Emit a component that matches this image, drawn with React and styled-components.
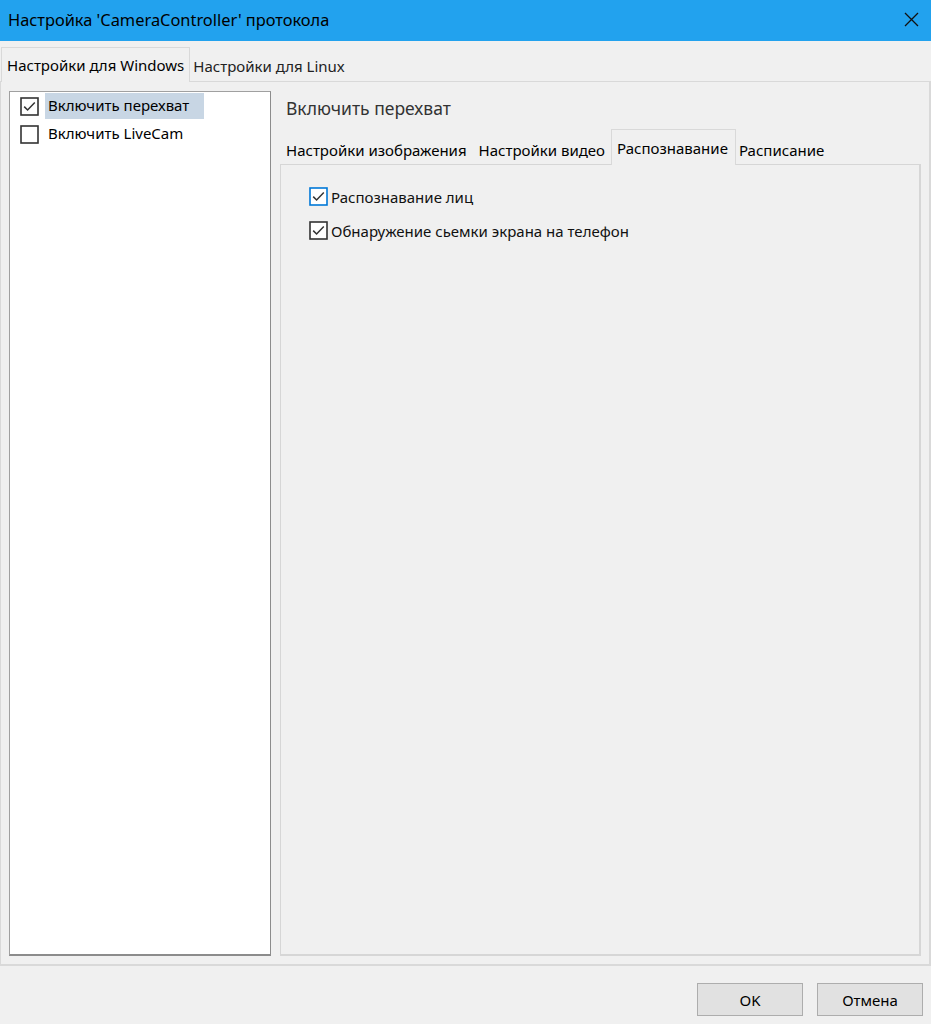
import React from "react";
import styled, { createGlobalStyle } from "styled-components";

const Global = createGlobalStyle`
  html, body { margin: 0; padding: 0; background: #f0f0f0; }
  body { font-family: "Noto Sans", "Open Sans", sans-serif; font-size: 15px; color: #000; }
  * { box-sizing: border-box; }
`;

const Window = styled.div`
  width: 931px;
  height: 1024px;
  display: flex;
  flex-direction: column;
  background: #f0f0f0;
  overflow: hidden;
`;

const TitleBar = styled.div`
  height: 41px;
  flex: none;
  background: #22a2ee;
  display: flex;
  align-items: center;
  justify-content: space-between;
  padding: 0 12px 2px 8px;
  font-size: 16.4px;
  color: #000;
`;

const CloseBtn = styled.div`
  width: 16px;
  height: 16px;
  display: flex;
  align-items: center;
  justify-content: center;
`;

const Body = styled.div`
  flex: 1;
  display: flex;
  flex-direction: column;
  padding-top: 5px;
`;

const TabStrip = styled.div`
  display: flex;
  align-items: flex-end;
  padding-left: ${(p) => p.$indent ?? 1}px;
  height: ${(p) => p.$h}px;
  flex: none;
  position: relative;
  z-index: 1;
`;

const Tab = styled.div`
  height: ${(p) => (p.$active ? p.$h : p.$h - 2)}px;
  padding: 0 ${(p) => p.$pr ?? p.$pad}px 0 ${(p) => p.$pad}px;
  display: flex;
  align-items: center;
  padding-top: ${(p) => (p.$active ? 0 : 2)}px;
  border: 1px solid ${(p) => (p.$active ? "#d9d9d9" : "transparent")};
  border-bottom: none;
  background: #f0f0f0;
  margin-bottom: ${(p) => (p.$active ? -1 : 0)}px;
  white-space: nowrap;
  color: ${(p) => (p.$dim ? "#222" : "#000")};
`;

const OuterPane = styled.div`
  height: 885px;
  border: 1px solid #d9d9d9;
  border-right-width: 2px;
  border-bottom-width: 2px;
  display: flex;
  gap: 9px;
  padding: 9px 8px 8px 8px;
`;

const ListBox = styled.div`
  width: 262px;
  flex: none;
  background: #fff;
  border: 1px solid #a0a0a0;
  border-right-color: #8c8c8c;
  border-bottom: 2px solid #8c8c8c;
  padding: 1px 0 0 10px;
  display: flex;
  flex-direction: column;
  gap: 2px;
`;

const ListItem = styled.div`
  display: flex;
  align-items: center;
  gap: 6px;
  height: 26px;
`;

const ItemLabel = styled.span`
  padding: 0 7px 0 3px;
  height: 26px;
  line-height: 25px;
  min-width: ${(p) => (p.$selected ? "159px" : "0")};
  background: ${(p) => (p.$selected ? "#c8d6e4" : "transparent")};
`;

const BoxWrap = styled.span`
  width: 19px;
  height: 19px;
  flex: none;
  display: inline-flex;
`;

const RightPanel = styled.div`
  flex: 1;
  display: flex;
  flex-direction: column;
`;

const Heading = styled.div`
  font-size: 17.5px;
  color: #333;
  padding: 5px 0 0 6px;
  height: 37px;
`;

const InnerPane = styled.div`
  flex: 1;
  border: 1px solid #d6d6d6;
  border-right-width: 2px;
  border-bottom-width: 2px;
  padding: 22px 0 0 28px;
  display: flex;
  flex-direction: column;
  gap: 15px;
`;

const CheckRow = styled.label`
  display: flex;
  align-items: center;
  gap: 3px;
  height: 19px;
  color: #111;
`;

const Footer = styled.div`
  flex: 1;
  display: flex;
  justify-content: flex-end;
  align-items: flex-start;
  gap: 14px;
  padding: 17px 8px 0 0;
`;

const Button = styled.button`
  width: 106px;
  height: 33px;
  background: #e1e1e1;
  border: 1px solid #adadad;
  font-family: inherit;
  font-size: 15px;
  color: #000;
  padding: 0;
`;

function CheckBox({ checked = false, focused = false }) {
  const border = focused ? "#0078d7" : "#333";
  return (
    <BoxWrap>
      <svg width="19" height="19" viewBox="0 0 19 19">
        <rect x="1" y="1" width="17" height="17" fill="#fff" stroke={border} strokeWidth="1.6" />
        {checked && (
          <path d="M4.2 9.6 L7.6 13 L14.8 5.6" fill="none" stroke="#333" strokeWidth="1.5" />
        )}
      </svg>
    </BoxWrap>
  );
}

export default function App() {
  return (
    <>
      <Global />
      <Window>
        <TitleBar>
          <span>Настройка 'CameraController' протокола</span>
          <CloseBtn>
            <svg width="15" height="15" viewBox="0 0 15 15">
              <path d="M1 1 L14 14 M14 1 L1 14" stroke="#111" strokeWidth="1.3" />
            </svg>
          </CloseBtn>
        </TitleBar>
        <Body>
          <TabStrip $h={35}>
            <Tab $active $h={35} $pad={5}>Настройки для Windows</Tab>
            <Tab $h={35} $pad={2} $dim>Настройки для Linux</Tab>
          </TabStrip>
          <OuterPane>
            <ListBox>
              <ListItem>
                <CheckBox checked />
                <ItemLabel $selected>Включить перехват</ItemLabel>
              </ListItem>
              <ListItem>
                <CheckBox />
                <ItemLabel>Включить LiveCam</ItemLabel>
              </ListItem>
            </ListBox>
            <RightPanel>
              <Heading>Включить перехват</Heading>
              <TabStrip $h={36} $indent={0}>
                <Tab $h={34} $pad={5}>Настройки изображения</Tab>
                <Tab $h={34} $pad={5}>Настройки видео</Tab>
                <Tab $active $h={36} $pad={5} $pr={7}>Распознавание</Tab>
                <Tab $h={34} $pad={2}>Расписание</Tab>
              </TabStrip>
              <InnerPane>
                <CheckRow>
                  <CheckBox checked focused />
                  <span>Распознавание лиц</span>
                </CheckRow>
                <CheckRow>
                  <CheckBox checked />
                  <span>Обнаружение сьемки экрана на телефон</span>
                </CheckRow>
              </InnerPane>
            </RightPanel>
          </OuterPane>
          <Footer>
            <Button>OK</Button>
            <Button>Отмена</Button>
          </Footer>
        </Body>
      </Window>
    </>
  );
}
